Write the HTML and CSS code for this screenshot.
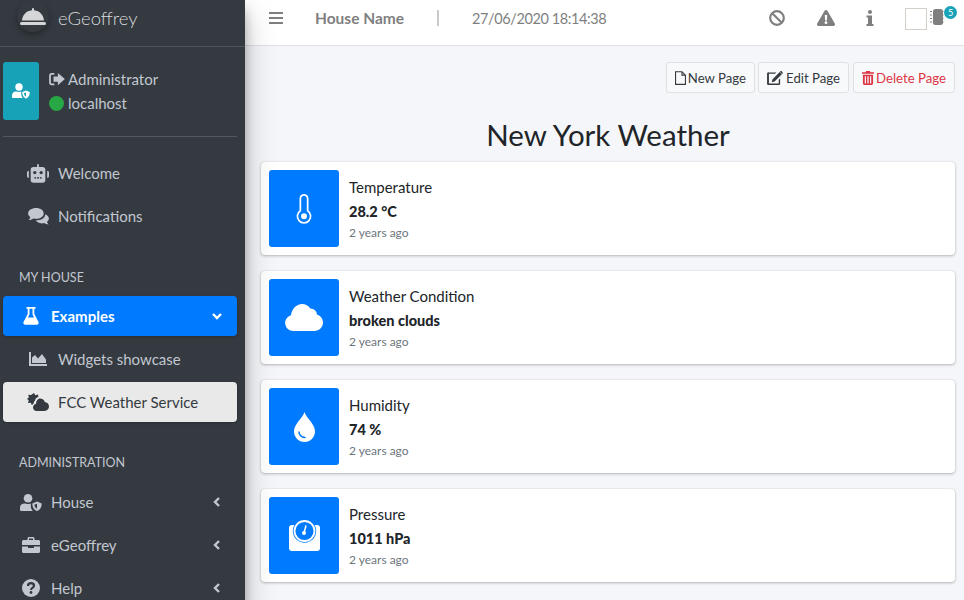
FILE: index.html
```html
<!DOCTYPE html>
<html>
<head>
    <meta charset="UTF-8">
    <title>eGeoffrey</title>
    <link rel="stylesheet" href="styles.css">
</head>
<body>
    <div class="wrapper">
        <aside class="sidebar">
            <div class="brand">
                <span class="brand-logo">
                    <svg viewBox="0 0 32 32" width="32" height="32"><g transform="translate(0 3)"><path fill="#d5d6d8" d="M15 5.500a1.500 1.500 0 0 1 2 0V7.200c6 .6 9.500 5 10 10.300H5c.5-5.300 4-9.700 10-10.300z"/><rect x="3" y="19" width="26" height="3" rx="1.500" fill="#d5d6d8"/></g></svg>
                </span>
                <span class="brand-text">eGeoffrey</span>
            </div>

            <div class="user-panel">
                <div class="user-box">
                    <svg viewBox="0 0 18 16" width="18" height="16"><circle cx="7" cy="4" r="3.700" fill="#fff"/><path fill="#fff" d="M1 15c-.6 0-1-.4-1-1v-1.500C0 10 2 8.500 4 8.500c1 0 2 .5 3 .5s1.500-.3 2.200-.4V11c0 1.500.7 3 1.800 4z"/><path fill="#fff" d="M14 7.500l3.800 1.500c0 3-1.200 5.500-3.800 6.800-2.600-1.300-3.800-3.800-3.800-6.800z"/><path fill="#17a2b8" d="M14 9.500v4.300c-1.200-.8-2-2.300-2.100-3.500z"/></svg>
                </div>
                <div class="user-info">
                    <div class="user-line">
                        <svg class="user-icon" viewBox="0 0 18 16" width="16" height="14"><path fill="none" stroke="#c2c7d0" stroke-width="2" d="M6 2H3a2 2 0 0 0-2 2v8a2 2 0 0 0 2 2h3"/><path fill="#c2c7d0" d="M10 1l8 7-8 7v-4H5V5h5z"/></svg>
                        Administrator
                    </div>
                    <div class="user-line">
                        <span class="status-dot"></span>
                        localhost
                    </div>
                </div>
            </div>

            <nav class="nav">
                <a class="nav-item">
                    <span class="nav-icon nav-icon-sub">
                        <svg viewBox="0 0 24 20" width="23" height="19"><path fill="currentColor" d="M11 0h2v3h4a3 3 0 0 1 3 3v11a3 3 0 0 1-3 3H7a3 3 0 0 1-3-3V6a3 3 0 0 1 3-3h4zM0 9a2 2 0 0 1 2-2v8a2 2 0 0 1-2-2zm24 0v4a2 2 0 0 1-2 2V7a2 2 0 0 1 2 2z"/><g fill="#343a40"><circle cx="8.500" cy="9" r="1.800"/><circle cx="15.500" cy="9" r="1.800"/><rect x="8" y="14" width="2" height="1.500"/><rect x="11" y="14" width="2" height="1.500"/><rect x="14" y="14" width="2" height="1.500"/></g></svg>
                    </span>
                    Welcome
                </a>
                <a class="nav-item">
                    <span class="nav-icon nav-icon-sub">
                        <svg viewBox="0 0 22 18" width="21" height="17"><path fill="currentColor" d="M8.500 0C13 0 16.500 2.500 16.500 5.800S13 11.500 8.500 11.500c-1 0-2-.1-2.900-.4C4.500 12 2.800 12.700.5 12.700c1-1 1.600-2.100 1.800-3C.9 8.600 0 7.300 0 5.800 0 2.500 3.800 0 8.500 0z"/><path fill="currentColor" d="M18 6.500c2.300.8 4 2.500 4 4.700 0 1.400-.8 2.600-2 3.500.2.900.8 1.900 1.800 2.800-2 0-3.700-.6-4.900-1.500-.8.200-1.600.3-2.400.3-2.800 0-5.200-1.200-6.400-3.200C13.800 13 18.500 10.500 18 6.500z"/></svg>
                    </span>
                    Notifications
                </a>

                <h6 class="nav-heading nav-heading-first">MY HOUSE</h6>
                <a class="nav-item nav-item-active">
                    <span class="nav-icon">
                        <svg viewBox="0 0 16 18" width="16" height="18"><path fill="#fff" d="M3.500 0h9v1.800h-1.200v5.300l4.200 7.800c.6 1.300-.2 2.900-1.900 2.900H2.400C.7 17.900-.1 16.300.5 14.900l4.200-7.800V1.800H3.500zM6.500 1.800v5.700l-1.600 3h6.200l-1.600-3V1.800z"/></svg>
                    </span>
                    Examples
                    <svg class="nav-arrow" viewBox="0 0 10 10" width="10" height="10"><path fill="none" stroke="#fff" stroke-width="2.400" d="M1 3l4 4 4-4"/></svg>
                </a>
                <a class="nav-item">
                    <span class="nav-icon nav-icon-sub">
                        <svg viewBox="0 0 18 14" width="18" height="14"><path fill="currentColor" d="M0 0h2v12h16v2H0zM3 11V5.500L6 3l3 3.500L13 2l4 5.500V11z"/></svg>
                    </span>
                    Widgets showcase
                </a>
                <a class="nav-item nav-item-current">
                    <span class="nav-icon nav-icon-sub">
                        <svg viewBox="0 0 22 18" width="22" height="18"><path fill="#343a40" d="M7 0l1.300 2.300L11 1.600l.4 2.500C9.500 4.500 8.200 6 7.900 7.800 7.300 8.500 6.500 9.700 6.500 10.800L4.800 12 3.800 9.700 1 10l.7-2.700L0 6l1.900-1.700L1.200 1.800 4 2z"/><path fill="#343a40" d="M13 5.500c2.400 0 4.300 1.500 4.800 3.500 2.200.2 4.200 2 4.200 4.300 0 2.600-2 4.700-4.500 4.700H9.500C7.500 18 6 16.400 6 14.500s1.400-3.300 3-3.500c0-3 1.800-5.500 4-5.500z"/></svg>
                    </span>
                    FCC Weather Service
                </a>

                <h6 class="nav-heading">ADMINISTRATION</h6>
                <a class="nav-item">
                    <span class="nav-icon">
                        <svg viewBox="0 0 22 17" width="22" height="17"><circle cx="8" cy="4.300" r="4.300" fill="currentColor"/><path fill="currentColor" d="M1.600 17C.7 17 0 16.300 0 15.400v-2C0 11.200 2 9.500 4.500 9.500c1.200 0 2 .6 3.500.6s1.800-.3 2.800-.5V12c0 2 .7 3.700 2 5z"/><path fill="currentColor" d="M17 7.500l4.700 1.900c0 3.500-1.300 6.300-4.700 7.600-3.400-1.300-4.700-4.100-4.700-7.600z"/><path fill="#343a40" d="M17 9.700v5c-1.600-.9-2.500-2.600-2.700-4z"/></svg>
                    </span>
                    House
                    <svg class="nav-arrow" viewBox="0 0 10 10" width="10" height="10"><path fill="none" stroke="#c2c7d0" stroke-width="2.400" d="M7 1L3 5l4 4"/></svg>
                </a>
                <a class="nav-item">
                    <span class="nav-icon">
                        <svg viewBox="0 0 18 16" width="18" height="16"><path fill="currentColor" d="M5.500 3V1.500C5.500.7 6.200 0 7 0h4c.8 0 1.500.7 1.500 1.500V3h4C17.300 3 18 3.700 18 4.500V8H0V4.500C0 3.700.7 3 1.500 3zM7 3h4V1.500H7zM0 9.500h6V11h6V9.500h6v5c0 .8-.7 1.500-1.500 1.500h-15C.7 16 0 15.300 0 14.500z"/></svg>
                    </span>
                    eGeoffrey
                    <svg class="nav-arrow" viewBox="0 0 10 10" width="10" height="10"><path fill="none" stroke="#c2c7d0" stroke-width="2.400" d="M7 1L3 5l4 4"/></svg>
                </a>
                <a class="nav-item">
                    <span class="nav-icon">
                        <svg viewBox="0 0 18 18" width="18" height="18"><circle cx="9" cy="9" r="9" fill="currentColor"/><path fill="none" stroke="#343a40" stroke-width="2.200" d="M6 7c0-1.800 1.300-2.800 3-2.800S12 5.300 12 6.800c0 2.200-3 2.100-3 4.200"/><circle cx="9" cy="13.500" r="1.400" fill="#343a40"/></svg>
                    </span>
                    Help
                    <svg class="nav-arrow" viewBox="0 0 10 10" width="10" height="10"><path fill="none" stroke="#c2c7d0" stroke-width="2.400" d="M7 1L3 5l4 4"/></svg>
                </a>
            </nav>
        </aside>

        <div class="main">
            <header class="topbar">
                <svg class="bars" viewBox="0 0 14 12" width="14" height="12"><path fill="#7f7f7f" d="M0 0h14v2H0zM0 5h14v2H0zM0 10h14v2H0z"/></svg>
                <span class="house-name">House Name</span>
                <span class="topbar-sep"></span>
                <span class="clock">27/06/2020 18:14:38</span>
                <div class="topbar-right">
                    <svg class="top-icon top-ban" viewBox="0 0 16 16" width="16" height="16"><circle cx="8" cy="8" r="6.800" fill="none" stroke="#7f7f7f" stroke-width="2.200"/><path stroke="#7f7f7f" stroke-width="2.200" d="M3.200 3.200l9.600 9.600"/></svg>
                    <svg class="top-icon top-warn" viewBox="0 0 18 16" width="18" height="16"><path fill="#7f7f7f" fill-rule="evenodd" d="M9 0c.6 0 1.100.3 1.400.8l7.400 12.800c.6 1.100-.2 2.400-1.400 2.400H1.600c-1.200 0-2-1.300-1.400-2.400L7.600.8C7.900.3 8.400 0 9 0zM7.800 5l.3 5.500h1.800L10.200 5zM9 11.300a1.400 1.400 0 1 0 0 2.800 1.400 1.400 0 0 0 0-2.800z"/></svg>
                    <svg class="top-icon top-info" viewBox="0 0 8 16" width="8" height="16"><circle cx="4" cy="2" r="2" fill="#7f7f7f"/><path fill="#7f7f7f" d="M.5 5.500H6V14h1.500v2h-7v-2H2V7.500H.5z"/></svg>
                    <span class="blank-box"></span>
                    <span class="chip-wrap">
                        <svg viewBox="0 0 14 16" width="14" height="16"><rect x="3" y="0" width="10" height="16" rx="2.500" fill="#7f7f7f"/><path stroke="#7f7f7f" stroke-width="1" d="M0 2.500h2M0 6h2M0 9.500h2M0 13h2"/><path stroke="#bdbdbd" stroke-width="1" d="M13 2.500h1M13 6h1M13 9.500h1M13 13h1"/></svg>
                        <span class="badge">5</span>
                    </span>
                </div>
            </header>

            <div class="content">
                <div class="toolbar">
                    <button class="btn btn-new">
                        <svg viewBox="0 0 12 15" width="11" height="14"><path fill="none" stroke="#343a40" stroke-width="1.200" d="M.6.600h7l3.800 3.800v10H.6zM7.600.6v3.800h3.800"/></svg>
                        New Page
                    </button>
                    <button class="btn">
                        <svg viewBox="0 0 17 15" width="16" height="14"><path fill="#343a40" d="M2 1.500h8L8.500 3H2v10.500h10.500V9.500L14 8v6a1.500 1.500 0 0 1-1.500 1h-11A1.500 1.500 0 0 1 0 14V3a1.500 1.500 0 0 1 2-1.500z"/><path fill="#343a40" d="M13.500 1.200l2.300 2.300-7.800 7.800-3 .7.700-3zM14.300.4c.4-.4 1-.4 1.400 0l.9.900c.4.400.4 1 0 1.400l-.5.500-2.300-2.300z"/></svg>
                        Edit Page
                    </button>
                    <button class="btn btn-danger">
                        <svg viewBox="0 0 13 15" width="12" height="14"><path fill="#dc3545" d="M4.500 0h4l.7 1.300H13v1.700H0V1.300h3.800zM1 4h11v9.500c0 .8-.7 1.500-1.500 1.500h-8C1.700 15 1 14.300 1 13.500zm2 1.500v8h1.300v-8zm2.800 0v8h1.400v-8zm2.900 0v8H10v-8z" fill-rule="evenodd"/></svg>
                        Delete Page
                    </button>
                </div>

                <h2 class="page-title">New York Weather</h2>

                <div class="card">
                    <div class="card-icon">
                        <svg viewBox="0 0 16 30" width="16" height="30"><path fill="none" stroke="#fff" stroke-width="1.700" d="M4.350 4.500a3.650 3.650 0 0 1 7.300 0V16.800a6.600 6.600 0 1 1-7.300 0z"/><circle cx="8" cy="22.300" r="3" fill="#fff"/></svg>
                    </div>
                    <div class="card-body">
                        <div class="card-label">Temperature</div>
                        <div class="card-value">28.2 °C</div>
                        <div class="card-time">2 years ago</div>
                    </div>
                </div>

                <div class="card">
                    <div class="card-icon">
                        <svg viewBox="0 0 38 27" width="38" height="27"><path fill="#fff" d="M8 27a8 8 0 0 1-2-15.700C6.500 5 11.500 0 17 0c3.500 0 6.500 1.600 8.200 4.500A6.500 6.500 0 0 1 32 10.500c3.400 1.200 6 4 6 8 0 4.700-3.800 8.500-8.500 8.500z"/></svg>
                    </div>
                    <div class="card-body">
                        <div class="card-label">Weather Condition</div>
                        <div class="card-value">broken clouds</div>
                        <div class="card-time">2 years ago</div>
                    </div>
                </div>

                <div class="card">
                    <div class="card-icon">
                        <svg viewBox="0 0 21 30" width="21" height="30"><path fill="#fff" d="M10.500 0c1.600 6 10.500 11.500 10.500 19.500 0 5.800-4.700 10.500-10.500 10.500S0 25.300 0 19.500C0 11.500 8.900 6 10.500 0z"/><path fill="none" stroke="#007bff" stroke-width="1.500" stroke-linecap="round" d="M5 20c0 3 2.700 5.500 6 5.500"/></svg>
                    </div>
                    <div class="card-body">
                        <div class="card-label">Humidity</div>
                        <div class="card-value">74 %</div>
                        <div class="card-time">2 years ago</div>
                    </div>
                </div>

                <div class="card">
                    <div class="card-icon">
                        <svg viewBox="0 0 31 31" width="31" height="31"><path fill="#fff" d="M3 5h25a3 3 0 0 1 3 3v20a3 3 0 0 1-3 3H3a3 3 0 0 1-3-3V8a3 3 0 0 1 3-3z"/><circle cx="15.500" cy="11" r="11.700" fill="#007bff"/><circle cx="15.500" cy="11" r="10" fill="none" stroke="#fff" stroke-width="1.800"/><circle cx="15" cy="13" r="2" fill="#fff"/><path stroke="#fff" stroke-width="1.500" d="M15 13l2-7.500"/></svg>
                    </div>
                    <div class="card-body">
                        <div class="card-label">Pressure</div>
                        <div class="card-value">1011 hPa</div>
                        <div class="card-time">2 years ago</div>
                    </div>
                </div>
            </div>
        </div>
    </div>
</body>
</html>
```

FILE: styles.css
```css
html, body {
    height: 100%;
}
body {
    margin: 0;
    overflow: hidden;
    font-family: 'Lato', 'Noto Sans', sans-serif;
    font-size: 15px;
    color: #212529;
    background-color: #f4f6f9;
}
.wrapper {
    display: flex;
    height: 600px;
    overflow: hidden;
}

/* sidebar */
.sidebar {
    flex: 0 0 245px;
    height: 640px;
    background: #343a40;
    color: #c2c7d0;
    box-shadow: 0 14px 28px rgba(0,0,0,0.25), 0 10px 10px rgba(0,0,0,0.22);
    position: relative;
    z-index: 2;
}
.brand {
    display: flex;
    height: 46px;
    border-bottom: 1px solid #4b545c;
    box-sizing: content-box;
}
.brand-logo {
    width: 32px;
    height: 32px;
    margin: 0 0 0 17px;
    border-radius: 50%;
    box-shadow: 0 3px 6px rgba(0,0,0,0.3);
}
.brand-text {
    margin-left: 9px;
    font-size: 18.500px;
    font-weight: 300;
    line-height: 36px;
    color: #d9dadc;
}
.user-panel {
    display: flex;
    margin: 15px 8px 0 3px;
    padding-bottom: 16px;
    border-bottom: 1px solid #4f5962;
}
.user-box {
    display: flex;
    align-items: center;
    justify-content: center;
    width: 36px;
    height: 58px;
    background: #17a2b8;
    border-radius: 3px;
}
.user-info {
    margin-left: 10px;
    padding-top: 5px;
}
.user-line {
    display: flex;
    align-items: center;
    height: 24px;
}
.user-icon {
    margin-right: 3px;
}
.status-dot {
    width: 15px;
    height: 15px;
    margin-right: 4px;
    border-radius: 50%;
    background: #28a745;
}
.nav {
    margin: 16px 8px 0 3px;
}
.nav-item {
    display: flex;
    align-items: center;
    height: 40px;
    margin-bottom: 3px;
    padding: 0 14px 0 17px;
    border-radius: 4px;
}
.nav-icon {
    display: flex;
    justify-content: center;
    width: 22px;
    margin-right: 9px;
}
.nav-icon-sub {
    margin-left: 7px;
    margin-right: 9px;
}
.nav-arrow {
    margin-left: auto;
    margin-right: 1px;
}
.nav-item-active {
    background: #007bff;
    color: #fff;
    font-weight: 700;
    box-shadow: 0 1px 3px rgba(0,0,0,0.2);
}
.nav-item-current {
    background: #e9e9e9;
    color: #343a40;
    box-shadow: 0 1px 3px rgba(0,0,0,0.2);
}
.nav-heading {
    margin: 0;
    padding: 28px 0 9px 16px;
    font-size: 12.500px;
    font-weight: 400;
    line-height: 20px;
}
.nav-heading-first {
    padding: 29px 0 8px 16px;
}

/* top bar */
.main {
    flex: 1;
    min-width: 0;
}
.topbar {
    display: flex;
    align-items: center;
    height: 36px;
    padding: 0 0 9px 24px;
    background: #fff;
    border-bottom: 1px solid #dee2e6;
    color: #7f7f7f;
}
.bars {
    flex: none;
}
.house-name {
    margin-left: 32px;
    font-size: 15.500px;
    font-weight: 700;
}
.topbar-sep {
    width: 2px;
    height: 16px;
    margin: 0 33px;
    background: #c8cacb;
}
.clock {
    font-size: 14.500px;
    letter-spacing: -0.4px;
}
.topbar-right {
    display: flex;
    align-items: center;
    margin-left: auto;
    margin-right: 20px;
}
.top-ban {
    margin-right: 32px;
}
.top-warn {
    margin-right: 31px;
}
.top-info {
    margin-right: 31px;
}
.blank-box {
    width: 22px;
    height: 22px;
    border: 1px solid #d3cfc8;
    margin-top: 2px;
    box-sizing: border-box;
    margin-right: 3px;
}
.chip-wrap {
    position: relative;
    display: flex;
    margin-top: -2px;
}
.badge {
    position: absolute;
    top: -3px;
    right: -13px;
    width: 13px;
    height: 13px;
    border-radius: 50%;
    background: #17a2b8;
    color: #fff;
    font-size: 9px;
    line-height: 13px;
    text-align: center;
}

/* page */
.content {
    padding: 16px 9px 0 16px;
}
.toolbar {
    display: flex;
    justify-content: flex-end;
    gap: 3px;
}
.btn {
    display: flex;
    align-items: center;
    gap: 3px;
    height: 31px;
    padding: 0 8px;
    background: #f8f9fa;
    border: 1px solid #dfe0e1;
    border-radius: 3px;
    color: #343a40;
    font-family: 'Lato', 'Noto Sans', sans-serif;
    font-size: 13.200px;
}
.btn-new {
    gap: 2px;
}
.btn-danger {
    gap: 2px;
    margin-left: 1px;
    color: #dc3545;
}
.page-title {
    margin: 23px 0 8px;
    font-size: 29.500px;
    font-weight: 400;
    line-height: 38px;
    text-align: center;
}
.card {
    display: flex;
    height: 93px;
    margin-bottom: 16px;
    padding: 8px;
    box-sizing: border-box;
    background: #fff;
    border-radius: 4px;
    box-shadow: 0 0 1px rgba(0,0,0,0.2), 0 1px 3px rgba(0,0,0,0.25);
}
.card-icon {
    display: flex;
    flex: none;
    align-items: center;
    justify-content: center;
    width: 70px;
    height: 77px;
    background: #007bff;
    border-radius: 3px;
}
.card-body {
    margin-left: 10px;
    padding-top: 5px;
}
.card-label {
    line-height: 24px;
}
.card-value {
    margin-top: 1px;
    font-weight: 900;
    font-size: 14.500px;
    line-height: 24px;
}
.card-time {
    font-size: 12px;
    line-height: 17px;
    color: #6c757d;
}
```
